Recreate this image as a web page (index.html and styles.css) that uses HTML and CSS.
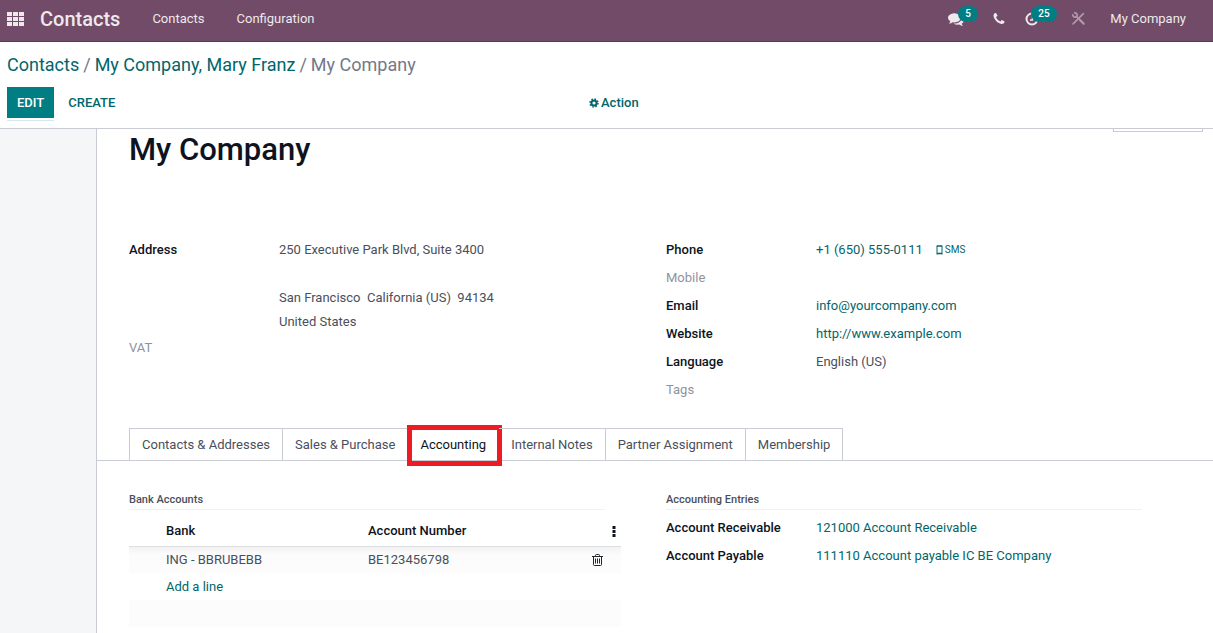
FILE: index.html
```html
<!DOCTYPE html>
<html lang="en">
<head>
<meta charset="utf-8">
<title>My Company - Contacts</title>
<link rel="stylesheet" href="styles.css">
</head>
<body>
<header class="navbar">
  <button class="apps" type="button" aria-label="Home menu">
    <svg width="18" height="14" viewBox="0 0 18 14" fill="currentColor"><path d="M0 0h5v4H0zM6 0h5v4H6zM12 0h5v4h-5zM0 5h5v4H0zM6 5h5v4H6zM12 5h5v4h-5zM0 10h5v4H0zM6 10h5v4H6zM12 10h5v4h-5z"/></svg>
  </button>
  <a class="brand" href="#">Contacts</a>
  <nav class="menu">
    <a href="#">Contacts</a>
    <a href="#">Configuration</a>
  </nav>
  <div class="systray">
    <button class="tray-item messages" type="button" aria-label="Messages">
      <svg width="16" height="16" viewBox="0 0 1792 1792" fill="currentColor"><path d="M1408 768q0 139-94 257t-256.5 186.5-353.5 68.5q-86 0-176-16-124 88-278 128-36 9-86 16h-3q-11 0-20.5-8t-11.5-21q-1-3-1-6.5t.5-6.5 2-6l2.5-5 3.5-5.5 4-5 4.5-5 4-4.5q5-6 23-25t26-29.5 22.5-29 25-38.5 20.5-44q-124-72-195-177t-71-224q0-139 94-257t256.5-186.5 353.5-68.5 353.5 68.5 256.5 186.5 94 257zm384 256q0 120-71 224.5t-195 176.5q10 24 20.5 44t25 38.5 22.5 29 26 29.5 23 25q1 1 4 4.5t4.5 5 4 5 3.5 5.5l2.5 5 2 6 .5 6.5-1 6.5q-3 14-13 22t-22 7q-50-7-86-16-154-40-278-128-90 16-176 16-271 0-472-132 58 4 88 4 161 0 309-45t264-129q125-92 192-212t67-254q0-77-23-152 129 71 204 178t75 230z"/></svg>
      <span class="badge">5</span>
    </button>
    <button class="tray-item phone" type="button" aria-label="Phone">
      <svg width="14" height="14" viewBox="0 0 1792 1792" fill="currentColor"><path d="M1600 1240q0 27-10 70.500t-21 68.500q-21 50-122 106-94 51-186 51-27 0-52.500-3.500t-57.500-12.500-47.500-14.500-55.500-20.500-49-18q-98-35-175-83-128-79-264.500-215.500t-215.500-264.500q-48-77-83-175-3-9-18-49t-20.500-55.500-14.500-47.500-12.500-57.500-3.500-52.500q0-92 51-186 56-101 106-122 25-11 68.500-21t70.500-10q14 0 21 3 18 6 53 76 11 19 30 54t35 63.500 31 53.500q3 4 17.500 25t21.500 35.500 7 28.500q0 20-28.500 50t-62 55-62 53-28.500 46q0 9 5 22.500t8.500 20.500 14 24 11.500 19q76 137 174 235t235 174q2 1 19 11.500t24 14 20.500 8.500 22.500 5q18 0 46-28.500t53-62 55-62 50-28.500q14 0 28.500 7t35.500 21.500 25 17.500q25 15 53.500 31t63.500 35 54 30q70 35 76 53 3 7 3 21z"/></svg>
    </button>
    <button class="tray-item activities" type="button" aria-label="Activities">
      <svg width="14" height="14" viewBox="0 0 14 14" fill="none" stroke="currentColor" stroke-width="2"><circle cx="7" cy="7" r="5.500"/><path d="M7.500 4v4H5" stroke-width="1.400"/></svg>
      <span class="badge">25</span>
    </button>
    <button class="tray-item tools" type="button" aria-label="Developer tools">
      <svg width="13" height="13" viewBox="0 0 12 12" fill="none" stroke="currentColor" stroke-linecap="round"><path d="M1 11 10.500 1.500" stroke-width="1.500"/><path d="M4 4l3 3" stroke-width="1.500"/><path d="M7.500 7.500l3.300 3.300" stroke-width="2"/><path d="M2.500.8A2 2 0 1 1 .8 2.500" stroke-width="1.500"/></svg>
    </button>
    <a class="company" href="#">My Company</a>
  </div>
</header>

<section class="control-panel">
  <nav class="breadcrumb" aria-label="Breadcrumb">
    <a href="#">Contacts</a><span>/</span><a href="#">My Company, Mary Franz</a><span>/</span><span>My Company</span>
  </nav>
  <div class="actions">
    <div class="main-buttons">
      <button class="btn primary" type="button">EDIT</button>
      <button class="btn link" type="button">CREATE</button>
    </div>
    <button class="action" type="button">
      <svg width="10" height="10" viewBox="0 0 10 10" fill="none" stroke="currentColor"><circle cx="5" cy="5" r="2.600" stroke-width="2"/><circle cx="5" cy="5" r="4" stroke-width="1.400" stroke-dasharray="1.571 1.571"/></svg>
      Action
    </button>
  </div>
</section>

<main class="content">
  <article class="sheet">
    <div class="button-box"></div>
    <h1>My Company</h1>
    <div class="groups details">
      <dl class="fields">
        <dt>Address</dt>
        <dd class="address">
          <span class="street">250 Executive Park Blvd, Suite 3400</span>
          <span>San Francisco&nbsp; California (US)&nbsp; 94134</span>
          <span>United States</span>
        </dd>
        <dt class="empty">VAT</dt><dd></dd>
      </dl>
      <dl class="fields">
        <dt>Phone</dt>
        <dd><a href="#">+1 (650) 555-0111</a><a class="sms" href="#"><svg width="7" height="10" viewBox="0 0 7 10" fill="none" stroke="currentColor"><path d="M1 .5v9M6 .5v9"/><path d="M1 1h5M1 8.500h5" stroke-width="1.500"/></svg>SMS</a></dd>
        <dt class="empty">Mobile</dt><dd></dd>
        <dt>Email</dt><dd><a href="#">info@yourcompany.com</a></dd>
        <dt>Website</dt><dd><a href="#">http://www.example.com</a></dd>
        <dt>Language</dt><dd>English (US)</dd>
        <dt class="empty">Tags</dt><dd></dd>
      </dl>
    </div>

    <div class="tabs" role="tablist">
      <button type="button" role="tab">Contacts &amp; Addresses</button>
      <button type="button" role="tab">Sales &amp; Purchase</button>
      <button class="active" type="button" role="tab" aria-selected="true">Accounting</button>
      <button type="button" role="tab">Internal Notes</button>
      <button type="button" role="tab">Partner Assignment</button>
      <button type="button" role="tab">Membership</button>
    </div>

    <div class="groups">
      <section>
        <h2>Bank Accounts</h2>
        <table class="bank-list">
          <colgroup><col class="handle"><col class="bank"><col><col class="remove"><col class="optional"></colgroup>
          <thead>
            <tr><th></th><th>Bank</th><th>Account Number</th><th></th><th><button type="button" aria-label="Optional columns"><svg width="4" height="11" viewBox="0 0 4 11" fill="currentColor"><path d="M.5 0h3v3h-3zM.5 4h3v3h-3zM.5 8h3v3h-3z"/></svg></button></th></tr>
          </thead>
          <tbody>
            <tr class="record"><td></td><td>ING - BBRUBEBB</td><td>BE123456798</td><td><button type="button" aria-label="Delete"><svg width="11" height="12" viewBox="0 0 11 12" fill="none" stroke="currentColor"><path d="M0 2.500h11M3.500 2.500v-1q0-1 1-1h2q1 0 1 1v1M1.500 2.500v8q0 1 1 1h6q1 0 1-1v-8"/><path d="M3.500 4.500v5M5.500 4.500v5M7.500 4.500v5"/></svg></button></td><td></td></tr>
            <tr><td></td><td colspan="4"><a href="#">Add a line</a></td></tr>
            <tr class="blank"><td colspan="5"></td></tr>
          </tbody>
        </table>
      </section>
      <section>
        <h2>Accounting Entries</h2>
        <dl class="fields">
          <dt>Account Receivable</dt><dd><a href="#">121000 Account Receivable</a></dd>
          <dt>Account Payable</dt><dd><a href="#">111110 Account payable IC BE Company</a></dd>
        </dl>
      </section>
    </div>
  </article>
</main>
</body>
</html>
```
FILE: styles.css
```css
* { box-sizing: border-box; }

body {
  display: flex;
  flex-direction: column;
  min-height: 100vh;
  margin: 0;
  background: #fff;
  color: #4a4f5c;
  font: 13px/20px Roboto, "Liberation Sans", sans-serif;
}

a { color: #01666b; text-decoration: none; }

button {
  padding: 0;
  border: 0;
  background: none;
  color: inherit;
  font: inherit;
  cursor: pointer;
}

svg { display: block; }

h1, h2, dl, dd { margin: 0; }

/* Top bar */
.navbar {
  display: flex;
  align-items: center;
  height: 42px;
  padding: 0 27px 4px 7px;
  border-bottom: 1px solid #5a3a53;
  background: #714b67;
  color: #eee9ed;
}
.navbar a { color: inherit; }
.brand { margin-left: 15px; font-size: 20px; font-weight: 500; }
.menu { display: flex; gap: 32px; margin-left: 32px; }
.systray { display: flex; align-items: center; margin-left: auto; }
.tray-item { position: relative; }
.badge {
  position: absolute;
  bottom: 4px;
  left: 10px;
  min-width: 19px;
  padding: 0 7px;
  border-radius: 8px;
  background: #017e84;
  color: #fff;
  font-size: 10px;
  font-weight: 500;
  line-height: 16px;
}
.messages .badge { bottom: 5px; }
.activities .badge { left: 6px; }
.phone { margin-left: 28px; }
.activities { margin-left: 19px; }
.tools { margin-left: 33px; opacity: .5; }
.company { margin-left: 25px; }

/* Breadcrumb and buttons */
.control-panel {
  padding: 10px 7px;
  border-bottom: 1px solid #c9ccd2;
}
.breadcrumb { display: flex; gap: 4px; color: #74788a; font-size: 18px; line-height: 26px; }
.actions {
  display: grid;
  grid-template-columns: 582px 1fr;
  align-items: center;
  margin-top: 9px;
}
.main-buttons { display: flex; gap: 4px; }
.btn { height: 31px; padding: 0 10px; font-weight: 500; }
.primary { background: #017e84; color: #fff; box-shadow: 0 2px 0 0 #fff, 0 3px 0 0 #d5eaeb; }
.link, .action { color: #01666b; }
.action { display: flex; align-items: center; gap: 2px; font-weight: 500; }

/* Form sheet */
.content {
  display: flex;
  flex: 1;
  padding-left: 96px;
  background: #f5f6f8;
}
.sheet {
  position: relative;
  flex: 1;
  padding-left: 32px;
  border-left: 1px solid #c9ccd2;
  background: #fff;
}
.button-box {
  position: absolute;
  top: 0;
  right: 10px;
  width: 90px;
  height: 3px;
  border: 1px solid #c9ccd2;
  border-top: 0;
}
h1 { color: #0d1321; font-size: 31px; font-weight: 500; line-height: 42px; }

.groups {
  display: grid;
  grid-template-columns: 1fr 1fr;
  padding-right: 10px;
}
.details { margin-top: 65px; }
.fields {
  display: grid;
  grid-template-columns: 150px 1fr;
  align-content: start;
}
.fields dt { color: #0d1321; font-weight: 500; line-height: 28px; }
.fields dt.empty { color: #8f939d; font-weight: 400; }
.fields dd { display: flex; line-height: 28px; }
.fields .address { flex-direction: column; padding-top: 2px; line-height: 24px; }
.street { height: 49px; }
.address { height: 98px; }
.sms { display: flex; align-items: center; gap: 2px; margin-left: 13px; font-size: 10px; }

/* Notebook */
.tabs {
  display: flex;
  margin: 24px 0 30px -32px;
  padding-left: 32px;
  border-bottom: 1px solid #c9ccd2;
}
.tabs button {
  position: relative;
  height: 32px;
  padding: 0 12px;
  border: solid #c9ccd2;
  border-width: 1px 1px 0 0;
}
.tabs button:first-child { border-left-width: 1px; }
.tabs .active { color: #0d1321; }
.tabs .active::after {
  content: "";
  position: absolute;
  inset: -4px -4px -6px -1px;
  border: 5px solid #ed1c24;
}

h2 {
  width: 476px;
  max-width: 100%;
  border-bottom: 1px solid #f1f2f4;
  font-size: 11px;
  font-weight: 500;
  line-height: 18px;
}
section > .fields { margin-top: 4px; }

.bank-list {
  width: 492px;
  max-width: 100%;
  margin-top: 7px;
  table-layout: fixed;
  border-collapse: collapse;
}
.handle { width: 33px; }
.bank { width: 202px; }
.remove { width: 21px; }
.optional { width: 12px; }
.bank-list tr { height: 27px; }
.bank-list th, .bank-list td { padding: 0 4px; text-align: left; }
.bank-list th { height: 29px; color: #0d1321; font-weight: 500; }
.bank-list th:last-child { padding: 0 3px; }
.bank-list button { display: block; }
.record { border-top: 1px solid #dee0e3; background: linear-gradient(#f2f2f2, #fcfcfc 8px); }
.record button { color: #212529; }
.blank { background: #fcfcfc; }
```
